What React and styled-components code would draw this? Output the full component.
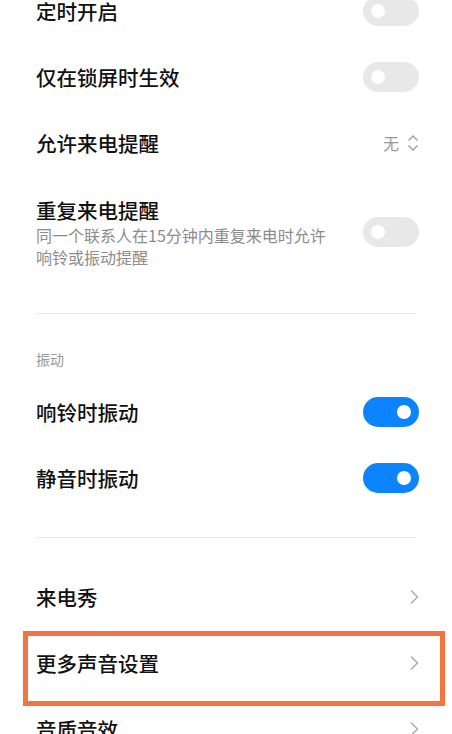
import React from "react";
import styled, { createGlobalStyle } from "styled-components";

const GlobalStyle = createGlobalStyle`
  html, body {
    margin: 0;
    padding: 0;
    background: #ffffff;
    overflow: hidden;
  }
  body {
    font-family: "Noto Sans CJK SC", "Noto Sans", sans-serif;
    -webkit-font-smoothing: antialiased;
  }
`;

const Page = styled.div`
  width: 452px;
  height: 734px;
  overflow: hidden;
  background: #ffffff;
`;

// the list is scrolled: first row is half cut off
const Scroller = styled.div`
  margin-top: -22px;
  padding: 0 33px 0 36px;
`;

const Row = styled.div`
  position: relative;
  display: flex;
  align-items: center;
  justify-content: space-between;
  min-height: 66px;
  padding: ${({ tall }) => (tall ? "20px 0" : "0")};
  box-sizing: border-box;
`;

const TextBlock = styled.div`
  display: flex;
  flex-direction: column;
`;

const Title = styled.div`
  font-size: 20.5px;
  font-weight: 500;
  line-height: 28px;
  color: #111111;
`;

const Subtitle = styled.div`
  font-size: 16px;
  line-height: 22px;
  color: #8c8c8c;
  width: 302px;
`;

const Divider = styled.div`
  height: 1px;
  background: #e8e8e8;
  margin: ${({ top }) => top}px 2px ${({ bottom }) => bottom}px 0;
`;

const SectionLabel = styled.div`
  font-size: 14px;
  line-height: 20px;
  color: #999999;
  margin-bottom: 10px;
`;

const Toggle = styled.div`
  position: relative;
  flex-shrink: 0;
  width: 56px;
  height: 30px;
  border-radius: 15px;
  background: ${({ on }) => (on ? "#0d84ff" : "#e8e8e8")};
`;

const Knob = styled.div`
  position: absolute;
  top: 8px;
  left: ${({ on }) => (on ? "34px" : "8px")};
  width: 14px;
  height: 14px;
  border-radius: 50%;
  background: #ffffff;
`;

const Value = styled.div`
  display: flex;
  align-items: center;
  gap: 8px;
  font-size: 16px;
  color: #999999;
`;

const Highlight = styled.div`
  position: absolute;
  left: -13px;
  right: -26px;
  top: 1px;
  bottom: -10px;
  border: 5px solid #f4733f;
  pointer-events: none;
`;

function Switch({ on }) {
  return (
    <Toggle on={on}>
      <Knob on={on} />
    </Toggle>
  );
}

function Chevron() {
  return (
    <svg width="10" height="16" viewBox="0 0 10 16">
      <path d="M2 1.5 L8.5 8 L2 14.5" fill="none" stroke="#a8a8a8" strokeWidth="1.4" />
    </svg>
  );
}

function UpDown() {
  return (
    <svg width="12" height="18" viewBox="0 0 12 18">
      <path d="M1.5 6.5 L6 2 L10.5 6.5" fill="none" stroke="#a0a0a0" strokeWidth="1.4" />
      <path d="M1.5 11.5 L6 16 L10.5 11.5" fill="none" stroke="#a0a0a0" strokeWidth="1.4" />
    </svg>
  );
}

export default function App() {
  return (
    <Page>
      <GlobalStyle />
      <Scroller>
        <Row>
          <Title>定时开启</Title>
          <Switch />
        </Row>
        <Row>
          <Title>仅在锁屏时生效</Title>
          <Switch />
        </Row>
        <Row>
          <Title>允许来电提醒</Title>
          <Value>
            无
            <UpDown />
          </Value>
        </Row>
        <Row tall>
          <TextBlock>
            <Title>重复来电提醒</Title>
            <Subtitle>同一个联系人在15分钟内重复来电时允许响铃或振动提醒</Subtitle>
          </TextBlock>
          <Switch />
        </Row>

        <Divider top={25} bottom={35} />

        <SectionLabel>振动</SectionLabel>
        <Row>
          <Title>响铃时振动</Title>
          <Switch on />
        </Row>
        <Row>
          <Title>静音时振动</Title>
          <Switch on />
        </Row>

        <Divider top={26} bottom={26} />

        <Row>
          <Title>来电秀</Title>
          <Chevron />
        </Row>
        <Row>
          <Title>更多声音设置</Title>
          <Chevron />
          <Highlight />
        </Row>
        <Row>
          <Title>音质音效</Title>
          <Chevron />
        </Row>
      </Scroller>
    </Page>
  );
}
